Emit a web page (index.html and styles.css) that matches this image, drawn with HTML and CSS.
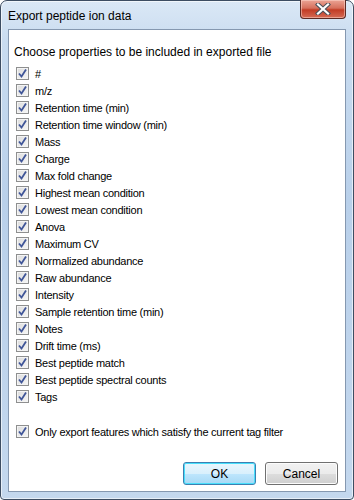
FILE: index.html
```html
<!DOCTYPE html>
<html lang="en">
<head>
    <meta charset="UTF-8">
    <title>Export peptide ion data</title>
    <link rel="stylesheet" href="styles.css">
</head>
<body>
    <div class="window">
        <div class="titlebar">
            <span class="title">Export peptide ion data</span>
            <div class="close-btn">
                <svg width="16" height="12" viewBox="0 0 16 12">
                    <path d="M3 1.5 L13 10.5 M13 1.5 L3 10.5" stroke="#4b4f58" stroke-width="4.2" stroke-linecap="square"/>
                    <path d="M3 1.5 L13 10.5 M13 1.5 L3 10.5" stroke="#ffffff" stroke-width="2.2" stroke-linecap="square"/>
                </svg>
            </div>
        </div>

        <div class="client">
            <p class="intro">Choose properties to be included in exported file</p>

            <div class="options" id="options"></div>

            <label class="option filter-option">
                <span class="check"><svg width="11" height="11" viewBox="0 0 11 11"><path d="M2 5.5 L4.5 8.5 L9 1.5" fill="none" stroke="#3f5598" stroke-width="1.8"/></svg></span>
                Only export features which satisfy the current tag filter
            </label>

            <div class="buttons">
                <button class="btn btn-default">OK</button>
                <button class="btn">Cancel</button>
            </div>
        </div>
    </div>

    <script>
        // Properties that can go into the exported file
        const properties = [
            '#', 'm/z', 'Retention time (min)', 'Retention time window (min)', 'Mass',
            'Charge', 'Max fold change', 'Highest mean condition', 'Lowest mean condition',
            'Anova', 'Maximum CV', 'Normalized abundance', 'Raw abundance', 'Intensity',
            'Sample retention time (min)', 'Notes', 'Drift time (ms)', 'Best peptide match',
            'Best peptide spectral counts', 'Tags'
        ];

        const list = document.getElementById('options');
        properties.forEach(name => {
            const row = document.createElement('label');
            row.className = 'option';
            row.innerHTML = '<span class="check"><svg width="11" height="11" viewBox="0 0 11 11"><path d="M2 5.5 L4.5 8.5 L9 1.5" fill="none" stroke="#3f5598" stroke-width="1.8"/></svg></span>';
            row.appendChild(document.createTextNode(name));
            list.appendChild(row);
        });
    </script>
</body>
</html>
```

FILE: styles.css
```css
* {
    margin: 0;
    padding: 0;
    box-sizing: border-box;
}

body {
    background: #ffffff;
    font-family: 'Liberation Sans', Arial, sans-serif;
    font-size: 11px;
    color: #000;
}

.window {
    width: 354px;
    height: 500px;
    display: flex;
    flex-direction: column;
    padding: 0 7px 7px 7px;
    border: 1px solid #3d4d62;
    border-radius: 7px 7px 4px 4px;
    background: linear-gradient(to bottom, #dbe8f6 0px, #c9dcf0 40px, #b9d0ea 200px, #c4d8ee 500px);
    box-shadow: inset 0 0 0 1px rgba(255, 255, 255, 0.6);
}

.titlebar {
    height: 28px;
    display: flex;
    justify-content: space-between;
    align-items: flex-start;
    flex-shrink: 0;
}

.title {
    font-size: 12px;
    margin-top: 8px;
    color: #000;
}

.close-btn {
    width: 46px;
    height: 19px;
    margin-top: -1px;
    display: flex;
    align-items: center;
    justify-content: center;
    border: 1px solid #5c2a24;
    border-top: none;
    border-radius: 0 0 4px 4px;
    background: linear-gradient(to bottom, #eba495 0%, #d6705d 45%, #c23c25 55%, #d56b55 100%);
    box-shadow: inset 0 0 0 1px rgba(255, 220, 210, 0.5);
}

.client {
    flex: 1;
    display: flex;
    flex-direction: column;
    background: #ffffff;
    border: 1px solid #8598b0;
    padding: 15px 7px 6px 5px;
}

.intro {
    font-size: 12px;
    margin-bottom: 6px;
}

.options {
    display: flex;
    flex-direction: column;
}

.option {
    height: 17px;
    display: flex;
    align-items: center;
    gap: 6px;
    padding-left: 2px;
    letter-spacing: -0.25px;
}

.filter-option {
    margin-top: 18px;
}

.check {
    width: 13px;
    height: 13px;
    flex-shrink: 0;
    display: flex;
    align-items: center;
    justify-content: center;
    border: 1px solid #8e8f8f;
    background: linear-gradient(135deg, #dcdcdc, #f6f6f6);
    box-shadow: inset 0 0 0 1px #f4f4f4;
}

.buttons {
    margin-top: auto;
    display: flex;
    justify-content: flex-end;
    gap: 9px;
}

.btn {
    width: 73px;
    height: 23px;
    font-family: 'Liberation Sans', Arial, sans-serif;
    font-size: 12px;
    color: #000;
    border: 1px solid #707070;
    border-radius: 3px;
    background: linear-gradient(to bottom, #f2f2f2 0%, #ebebeb 50%, #dddddd 51%, #cfcfcf 100%);
    box-shadow: inset 0 0 0 1px #fcfcfc;
}

.btn-default {
    border-color: #3c7fb1;
    background: linear-gradient(to bottom, #eaf6fd 0%, #d9f0fc 50%, #bee6fd 51%, #a7d9f5 100%);
    box-shadow: inset 0 0 0 1px #48dffb;
}
```
